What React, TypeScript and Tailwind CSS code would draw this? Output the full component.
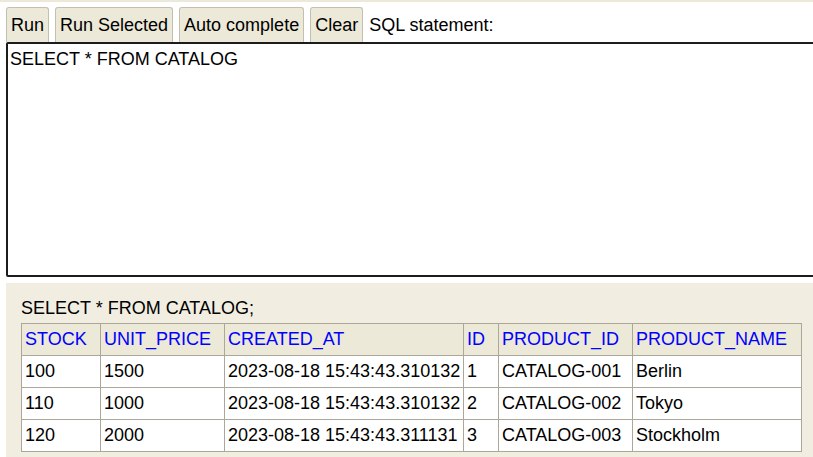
const columns = ['STOCK', 'UNIT_PRICE', 'CREATED_AT', 'ID', 'PRODUCT_ID', 'PRODUCT_NAME']

const rows = [
  ['100', '1500', '2023-08-18 15:43:43.310132', '1', 'CATALOG-001', 'Berlin'],
  ['110', '1000', '2023-08-18 15:43:43.310132', '2', 'CATALOG-002', 'Tokyo'],
  ['120', '2000', '2023-08-18 15:43:43.311131', '3', 'CATALOG-003', 'Stockholm'],
]

const colWidths = ['w-[79px]', 'w-[124px]', 'w-[239px]', 'w-[35px]', 'w-[134px]', 'w-[169px]']

function ToolButton({ label, className = '' }: { label: string; className?: string }) {
  return (
    <button
      className={`h-[35px] border border-b-0 border-[#c4c0b0] rounded-t-[3px] bg-[#ece9d8] px-[4px] text-black leading-[21px] ${className}`}
    >
      {label}
    </button>
  )
}

export default function App() {
  return (
    <div
      className="w-[813px] h-[457px] overflow-hidden bg-white text-[18px] leading-[21px] text-black"
      style={{ fontFamily: '"Liberation Sans", Arial, sans-serif' }}
    >
      <div className="h-[2px] bg-[#ece9d8]" />
      <div className="flex items-end gap-[6px] pl-[6px] pt-[5px]">
        <ToolButton label="Run" className="w-[43px]" />
        <ToolButton label="Run Selected" />
        <ToolButton label="Auto complete" />
        <ToolButton label="Clear" />
        <span className="pb-[6px]">SQL statement:</span>
      </div>
      <div className="ml-[6px] w-[830px] h-[235px] border-2 border-[#1c1c1c] rounded-[2px] bg-white px-[2px] pt-[5px]">
        SELECT * FROM CATALOG
      </div>
      <div className="ml-[6px] mt-[6px] w-[830px] h-[200px] bg-[#f1eee1] pl-[15px] pt-[15px]">
        <div>SELECT * FROM CATALOG;</div>
        <table className="mt-[4px] border-collapse table-fixed w-[781px]">
          <colgroup>
            {colWidths.map((w, i) => (
              <col key={i} className={w} />
            ))}
          </colgroup>
          <thead>
            <tr className="bg-[#ece9d8]">
              {columns.map((c) => (
                <th
                  key={c}
                  className="border border-[#aca899] px-[3px] py-[5px] text-left font-normal text-[#0000ff] whitespace-nowrap"
                >
                  {c}
                </th>
              ))}
            </tr>
          </thead>
          <tbody>
            {rows.map((r, i) => (
              <tr key={i} className="bg-white">
                {r.map((v, j) => (
                  <td key={j} className="border border-[#aca899] px-[3px] py-[5px] whitespace-nowrap">
                    {v}
                  </td>
                ))}
              </tr>
            ))}
          </tbody>
        </table>
      </div>
    </div>
  )
}
